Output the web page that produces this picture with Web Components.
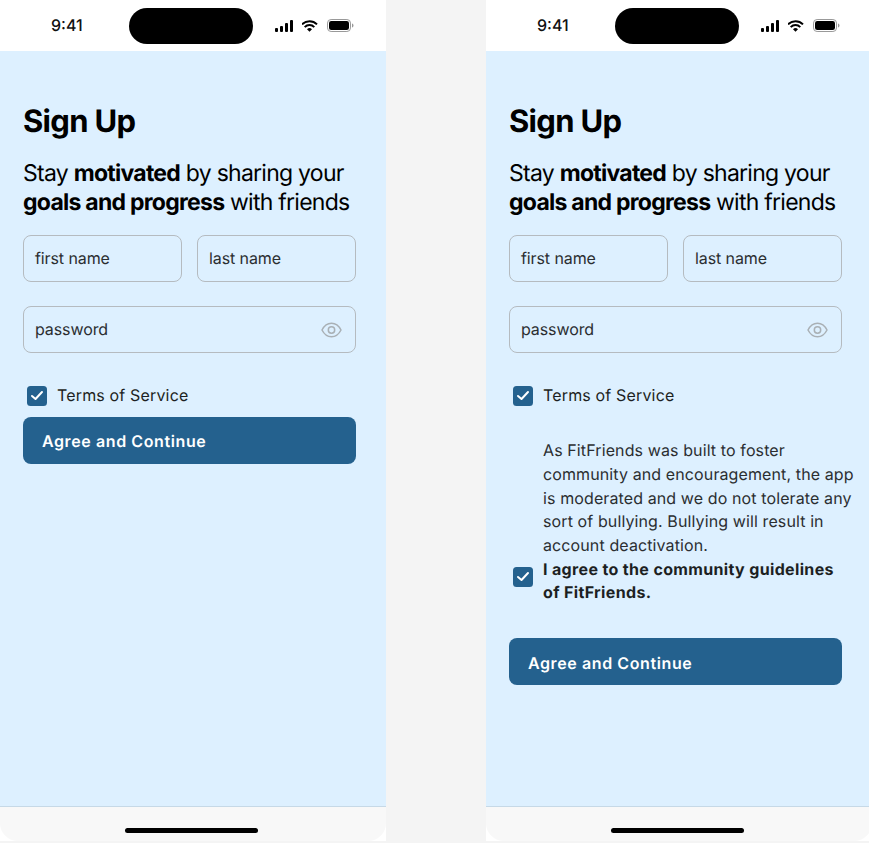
<!DOCTYPE html>
<html>
<head>
<meta charset="utf-8">
<title>Sign Up</title>
<style>
  html, body { margin: 0; height: 843px; overflow: hidden; background: #f4f4f4; }
  body { display: flex; gap: 100px; align-items: flex-start; font-family: Inter, sans-serif; text-rendering: geometricPrecision; }
</style>
</head>
<body>
<template id="phoneTemplate">
  <style>
    :host { display: flex; flex-direction: column; flex: none; width: 386px; height: 841px; background: #fff; color: #000; }
    .status { flex: none; height: 51px; display: flex; align-items: center; position: relative; background: #fff; }
    .time { position: absolute; left: 51px; top: 16px; font-size: 16px; line-height: 19px; font-weight: 500; color: #111; }
    .island { position: absolute; left: 129px; top: 8px; width: 124px; height: 36px; border-radius: 18px; background: #000; }
    .icons { position: absolute; left: 275px; top: 19px; display: flex; align-items: center; gap: 8px; }
    .icons svg { display: block; }
    .main { flex: 1; background: #ddf0ff; padding: 51px 30px 0 23px; display: flex; flex-direction: column; }
    .foot { flex: none; height: 34px; border-top: 1px solid #c6d9e7; background: #f8f8f8; border-radius: 0 0 18px 18px; display: flex; justify-content: center; }
    .bar { width: 133px; height: 5px; border-radius: 3px; background: #000; margin: 21px 3px 0 0; }
  </style>
  <div class="status">
    <span class="time">9:41</span>
    <div class="island"></div>
    <div class="icons">
      <svg width="19" height="12" viewBox="0 0 19 12"><rect x="0" y="8" width="3" height="4" rx="1"/><rect x="5" y="6" width="3" height="6" rx="1"/><rect x="10" y="3" width="3" height="9" rx="1"/><rect x="15" y="0" width="3" height="12" rx="1"/></svg>
      <svg width="17" height="12" viewBox="1 0 17 12" fill="none" stroke="#000" stroke-width="2"><path d="M1 4.4a10.6 10.6 0 0 1 15 0"/><path d="M3.7 7.1a6.8 6.8 0 0 1 9.6 0"/><path d="M8.5 11.8 6 9.2a3.5 3.5 0 0 1 5 0z" fill="#000" stroke="none"/></svg>
      <svg width="27" height="13" viewBox="0 0 27 13"><rect x=".5" y=".5" width="23" height="12" rx="3.6" fill="none" stroke="#999"/><rect x="2" y="2" width="20" height="9" rx="2.3"/><path d="M25 4.5v4c.9-.3 1.5-1.100 1.500-2s-.6-1.700-1.500-2z" fill="#999"/></svg>
    </div>
  </div>
  <div class="main"><slot></slot></div>
  <div class="foot"><div class="bar"></div></div>
</template>

<template id="headTemplate">
  <style>
    :host { display: block; color: #000; }
    h1 { margin: 0; font-size: 31px; line-height: 39px; font-weight: 700; letter-spacing: -.7px; }
    p { margin: 18px 0 0; font-size: 23px; line-height: 29px; font-weight: 400; letter-spacing: -.74px; white-space: nowrap; }
    ::slotted(b) { font-weight: 700; }
  </style>
  <h1>Sign Up</h1>
  <p><slot></slot></p>
</template>

<template id="fieldTemplate">
  <style>
    :host { display: flex; flex: 1 1 0; align-items: center; justify-content: space-between; box-sizing: border-box; height: 47px; padding: 0 13px 2px 11px; border: 1px solid #b5bbc0; border-radius: 8px; font-size: 16px; letter-spacing: -.1px; color: #2b2e31; }
    svg { display: block; margin-top: 2px; }
  </style>
  <span><slot></slot></span>
  <svg id="eye" width="21" height="16" viewBox="0 0 21 16" fill="none" stroke="#a9b0b5" stroke-width="1.500"><path d="M1 8c2.300-4.500 5.500-6.800 9.500-6.800S17.700 3.500 20 8c-2.300 4.500-5.500 6.800-9.500 6.800S3.300 12.500 1 8z"/><circle cx="10.500" cy="8" r="3.200"/></svg>
</template>

<template id="checkTemplate">
  <style>
    :host { display: flex; align-items: center; gap: 10px; font-size: 16px; line-height: 23.700px; letter-spacing: .16px; color: #1c1f22; }
    .box { flex: none; box-sizing: border-box; width: 20px; height: 20px; margin-bottom: var(--box-lift, 0); border-radius: 3.500px; background: #24618e; display: flex; align-items: center; justify-content: center; }
    .box svg { display: block; }
    .text { display: block; }
  </style>
  <span class="box"><svg width="14" height="11" viewBox="0 0 14 11" fill="none" stroke="#fff" stroke-width="2" stroke-linecap="round" stroke-linejoin="round"><path d="M2 6l3.500 3L12 2"/></svg></span>
  <span class="text"><slot></slot></span>
</template>

<template id="buttonTemplate">
  <style>
    :host { display: flex; align-items: center; box-sizing: border-box; height: 47px; padding: 2px 19px 0; border-radius: 8px; background: #24618e; color: #fff; font-size: 16px; font-weight: 600; letter-spacing: .6px; }
  </style>
  <slot></slot>
</template>

<template id="guideTemplate">
  <style>
    :host { display: block; box-sizing: border-box; margin-right: -15px; padding-left: 34px; font-size: 16px; line-height: 23.700px; letter-spacing: .11px; color: #2b2e31; }
  </style>
  <slot></slot>
</template>

<fit-phone>
  <signup-head>Stay <b>motivated</b> by sharing your<br><b>goals and progress</b> with friends</signup-head>
  <signup-row style="margin-top:18px"><text-field>first name</text-field><text-field>last name</text-field></signup-row>
  <signup-row style="margin-top:24px"><text-field eye>password</text-field></signup-row>
  <check-row style="margin:31px 0 0 4px">Terms of Service</check-row>
  <action-button style="margin-top:9px">Agree and Continue</action-button>
</fit-phone>

<fit-phone>
  <signup-head>Stay <b>motivated</b> by sharing your<br><b>goals and progress</b> with friends</signup-head>
  <signup-row style="margin-top:18px"><text-field>first name</text-field><text-field>last name</text-field></signup-row>
  <signup-row style="margin-top:24px"><text-field eye>password</text-field></signup-row>
  <check-row style="margin:31px 0 0 4px">Terms of Service</check-row>
  <guide-text style="margin-top:31.500px">As FitFriends was built to foster community and encouragement, the app is moderated and we do not tolerate any sort of bullying. Bullying will result in account deactivation.</guide-text>
  <check-row style="margin:0 -11px 0 4px;font-weight:700;letter-spacing:.35px;--box-lift:9px">I agree to the community guidelines of FitFriends.</check-row>
  <action-button style="margin-top:33px">Agree and Continue</action-button>
</fit-phone>

<script>
  (function signupPage(customElements) {
    'use strict';

    // each element just clones its template into an open shadow root
    function fromTemplate(id) {
      return class extends HTMLElement {
        constructor() {
          super();
          const shadowRoot = this.attachShadow({mode: 'open'});
          shadowRoot.appendChild(document.getElementById(id).content.cloneNode(true));
        }
      };
    }

    class TextField extends fromTemplate('fieldTemplate') {
      connectedCallback() {
        if (!this.hasAttribute('eye')) {
          this.shadowRoot.getElementById('eye').remove();
        }
      }
    }

    class SignupRow extends HTMLElement {
      constructor() {
        super();
        this.attachShadow({mode: 'open'}).innerHTML = `
          <style>:host { display: flex; gap: 15px; }</style>
          <slot></slot>`;
      }
    }

    customElements.define('fit-phone', fromTemplate('phoneTemplate'));
    customElements.define('signup-head', fromTemplate('headTemplate'));
    customElements.define('text-field', TextField);
    customElements.define('signup-row', SignupRow);
    customElements.define('check-row', fromTemplate('checkTemplate'));
    customElements.define('action-button', fromTemplate('buttonTemplate'));
    customElements.define('guide-text', fromTemplate('guideTemplate'));
  })(window.customElements);
</script>
</body>
</html>
